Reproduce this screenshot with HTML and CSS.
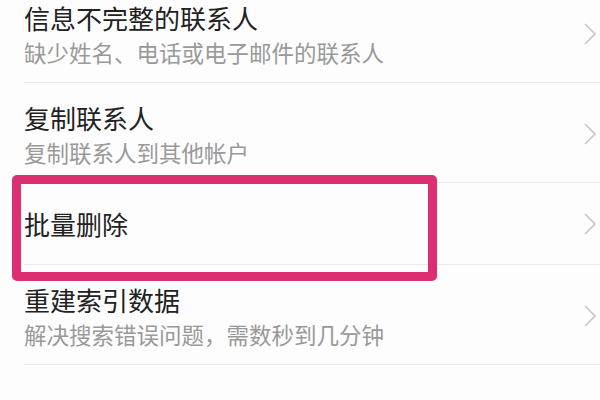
FILE: index.html
```html
<!DOCTYPE html>
<html>

<head>
  <meta charset="utf-8">
  <title>联系人设置</title>
  <link rel="stylesheet" href="styles.css">
</head>

<body>
  <ul class="settings-list">
    <li class="item">
      <div class="item-text">
        <div class="item-title">信息不完整的联系人</div>
        <div class="item-desc">缺少姓名、电话或电子邮件的联系人</div>
      </div>
      <svg class="chevron" width="14" height="24" viewBox="0 0 14 24"><polyline points="2,2 12,12 2,22" /></svg>
    </li>
    <li class="item">
      <div class="item-text">
        <div class="item-title">复制联系人</div>
        <div class="item-desc">复制联系人到其他帐户</div>
      </div>
      <svg class="chevron" width="14" height="24" viewBox="0 0 14 24"><polyline points="2,2 12,12 2,22" /></svg>
    </li>
    <li class="item item-single">
      <div class="item-text">
        <div class="item-title">批量删除</div>
      </div>
      <svg class="chevron" width="14" height="24" viewBox="0 0 14 24"><polyline points="2,2 12,12 2,22" /></svg>
      <!-- highlight frame drawn over the row -->
      <div class="highlight"></div>
    </li>
    <li class="item">
      <div class="item-text">
        <div class="item-title">重建索引数据</div>
        <div class="item-desc">解决搜索错误问题，需数秒到几分钟</div>
      </div>
      <svg class="chevron" width="14" height="24" viewBox="0 0 14 24"><polyline points="2,2 12,12 2,22" /></svg>
    </li>
  </ul>
</body>

</html>
```

FILE: styles.css
```css
/* Reset default margin and padding for body */
body {
  margin: 0;
  padding: 0;
  background-color: #fdfdfd;
  font-family: "Noto Sans CJK SC", "Noto Sans", sans-serif;
  overflow: hidden;
}

/* The list is cut off at the top of the screen */
.settings-list {
  list-style: none;
  margin: -17px 0 0 0;
  padding: 0;
}

/* One row of the list */
.item {
  position: relative;
  display: flex;
  align-items: center;
  margin-left: 24px;
  padding: 18px 3px 15px 0;
  border-bottom: 1px solid #e9e9e9;
}

.item-single {
  padding-top: 24px;
  padding-bottom: 23px;
}

.item-text {
  flex: 1;
}

/* Row title */
.item-title {
  color: #222;
  font-size: 26px;
  line-height: 34px;
}

/* Row description */
.item-desc {
  margin-top: 2px;
  color: #999;
  font-size: 22.5px;
  line-height: 30px;
}

/* Arrow on the right */
.chevron polyline {
  fill: none;
  stroke: #c6c6c6;
  stroke-width: 1.6;
}

/* Pink frame around the selected row */
.highlight {
  position: absolute;
  left: -12px;
  top: -8px;
  width: 425px;
  height: 106px;
  box-sizing: border-box;
  border: 9px solid #dc2f72;
  border-radius: 5px;
}
```
